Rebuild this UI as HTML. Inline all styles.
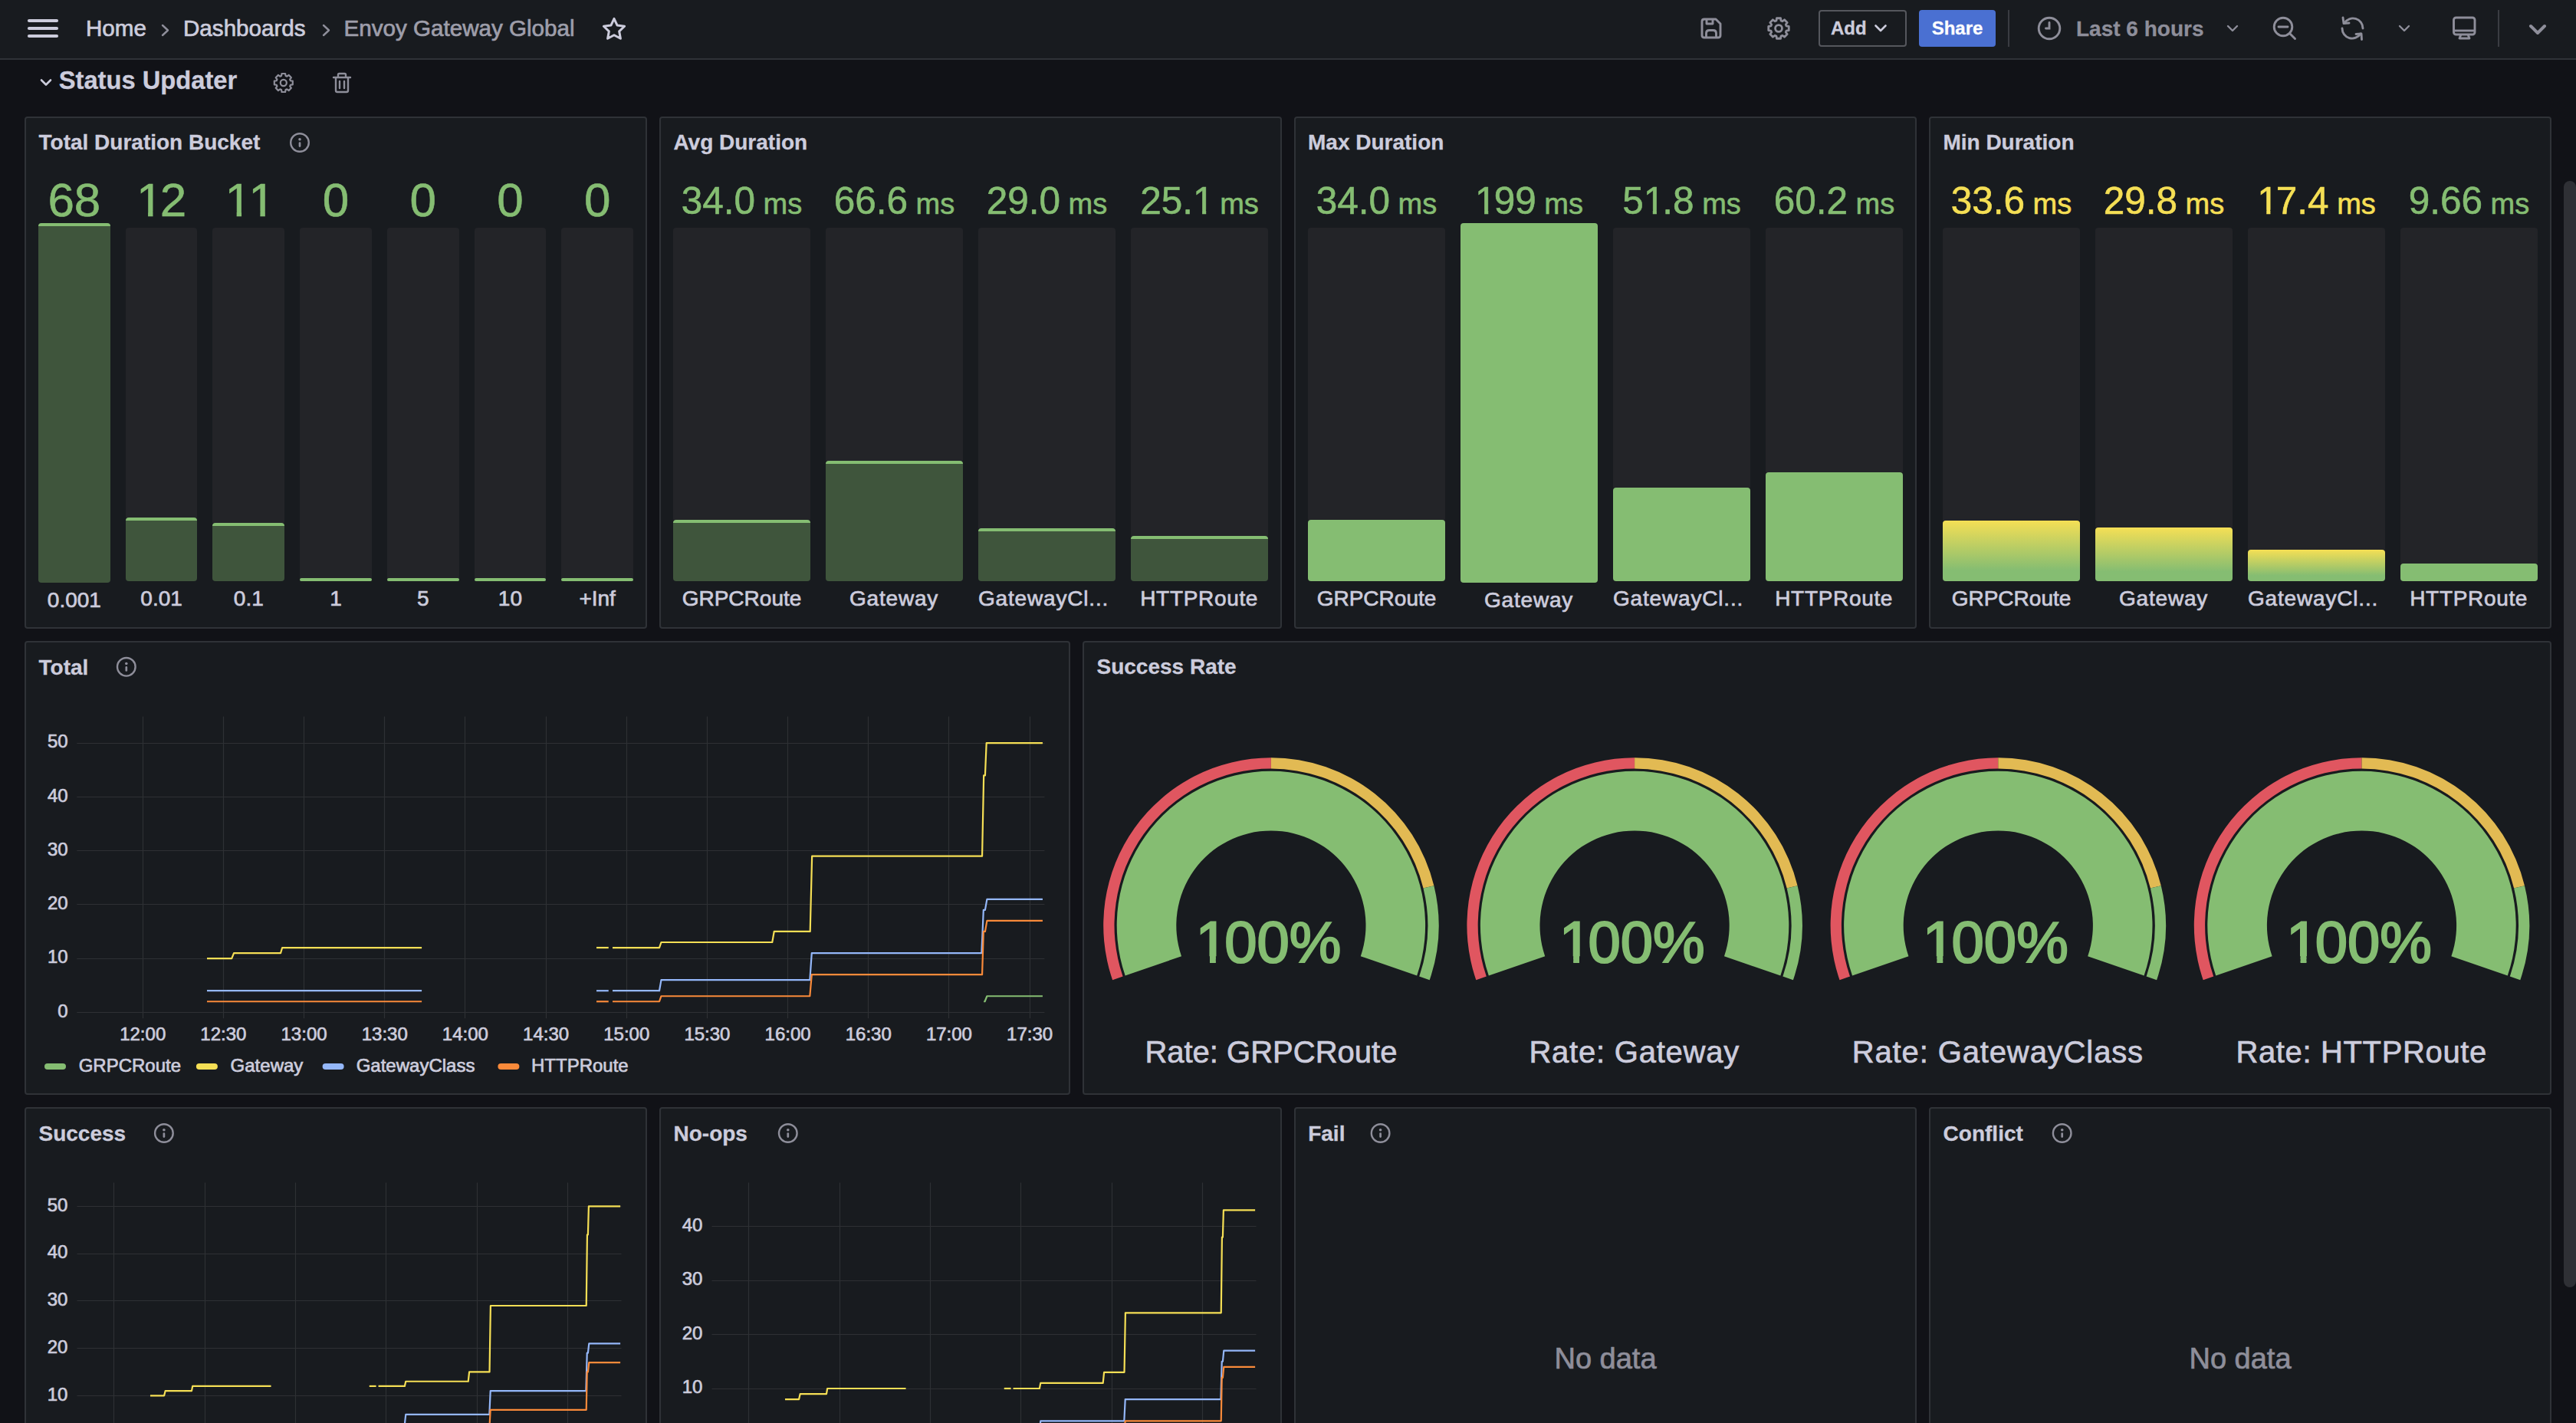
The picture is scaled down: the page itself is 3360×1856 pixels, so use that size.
<!DOCTYPE html><html><head><meta charset="utf-8"><title>Envoy Gateway Global - Dashboards - Grafana</title><style>html,body{margin:0;padding:0;}body{width:3360px;height:1856px;overflow:hidden;background:#111217;position:relative;font-family:"Liberation Sans", sans-serif;}.t{position:absolute;white-space:nowrap;}.one{display:inline-block;clip-path:polygon(-0.1em -0.2em,0.66em -0.2em,0.66em 0.742em,0.347em 0.742em,0.347em 1.1em,0.244em 1.1em,0.244em 0.742em,-0.1em 0.742em);margin-right:-0.06em;}.panel{position:absolute;background:#181b1f;border:2px solid #2f3237;border-radius:4px;}svg{position:absolute;left:0;top:0;}</style></head><body><div style="position:absolute;left:0;top:0;width:3360px;height:76px;background:#181b1f;border-bottom:2px solid #2f3237;"></div><div class="panel" style="left:32px;top:152px;width:808px;height:664px;"></div><div class="panel" style="left:860px;top:152px;width:808px;height:664px;"></div><div class="panel" style="left:1688px;top:152px;width:808px;height:664px;"></div><div class="panel" style="left:2516px;top:152px;width:808px;height:664px;"></div><div class="panel" style="left:32px;top:836px;width:1360px;height:588px;"></div><div class="panel" style="left:1412px;top:836px;width:1912px;height:588px;"></div><div class="panel" style="left:32px;top:1444px;width:808px;height:664px;"></div><div class="panel" style="left:860px;top:1444px;width:808px;height:664px;"></div><div class="panel" style="left:1688px;top:1444px;width:808px;height:664px;"></div><div class="panel" style="left:2516px;top:1444px;width:808px;height:664px;"></div><div style="position:absolute;left:3344px;top:236px;width:16px;height:1443px;border-radius:8px;background:#2f3035;"></div><div class="t" style="left:112.00px;top:21.94px;font-size:29.6px;line-height:29.6px;color:#ccccdc;-webkit-text-stroke-width:0.7px;">Home</div><div class="t" style="left:239.00px;top:21.94px;font-size:29.6px;line-height:29.6px;color:#ccccdc;-webkit-text-stroke-width:0.7px;">Dashboards</div><div class="t" style="left:448.50px;top:21.94px;font-size:29.6px;line-height:29.6px;color:#9e9eaa;-webkit-text-stroke-width:0.7px;">Envoy Gateway Global</div><div class="t" style="left:2388.00px;top:24.98px;font-size:24px;line-height:24px;color:#ccccdc;font-weight:700;-webkit-text-stroke-width:0.3px;">Add</div><div style="position:absolute;left:2372px;top:13px;width:111px;height:44px;border:2px solid #55575d;border-radius:4px;"></div><div style="position:absolute;left:2503px;top:13px;width:100px;height:48px;background:#4a70d2;border-radius:4px;"></div><div class="t" style="left:2519.70px;top:24.98px;font-size:24px;line-height:24px;color:#ffffff;font-weight:700;-webkit-text-stroke-width:0.3px;">Share</div><div style="position:absolute;left:2619px;top:13px;width:2px;height:48px;background:#3a3c42;"></div><div style="position:absolute;left:3258px;top:13px;width:2px;height:48px;background:#3a3c42;"></div><div class="t" style="left:2708.00px;top:23.50px;font-size:28px;line-height:28px;color:#8e8e9a;font-weight:700;-webkit-text-stroke-width:0.3px;">Last 6 hours</div><div class="t" style="left:76.70px;top:89.02px;font-size:32.7px;line-height:32.7px;color:#ccccdc;font-weight:700;-webkit-text-stroke-width:0.3px;">Status Updater</div><div class="t" style="left:50.50px;top:172.30px;font-size:28px;line-height:28px;color:#ccccdc;font-weight:700;-webkit-text-stroke-width:0.3px;">Total Duration Bucket</div><div class="t" style="left:878.40px;top:172.30px;font-size:28px;line-height:28px;color:#ccccdc;font-weight:700;-webkit-text-stroke-width:0.3px;">Avg Duration</div><div class="t" style="left:1706.00px;top:172.30px;font-size:28px;line-height:28px;color:#ccccdc;font-weight:700;-webkit-text-stroke-width:0.3px;">Max Duration</div><div class="t" style="left:2534.40px;top:172.30px;font-size:28px;line-height:28px;color:#ccccdc;font-weight:700;-webkit-text-stroke-width:0.3px;">Min Duration</div><div class="t" style="left:50.50px;top:856.60px;font-size:28px;line-height:28px;color:#ccccdc;font-weight:700;-webkit-text-stroke-width:0.3px;">Total</div><div class="t" style="left:1430.50px;top:856.40px;font-size:28px;line-height:28px;color:#ccccdc;font-weight:700;-webkit-text-stroke-width:0.3px;">Success Rate</div><div class="t" style="left:50.50px;top:1464.80px;font-size:28px;line-height:28px;color:#ccccdc;font-weight:700;-webkit-text-stroke-width:0.3px;">Success</div><div class="t" style="left:878.50px;top:1464.80px;font-size:28px;line-height:28px;color:#ccccdc;font-weight:700;-webkit-text-stroke-width:0.3px;">No-ops</div><div class="t" style="left:1706.20px;top:1464.80px;font-size:28px;line-height:28px;color:#ccccdc;font-weight:700;-webkit-text-stroke-width:0.3px;">Fail</div><div class="t" style="left:2534.60px;top:1464.80px;font-size:28px;line-height:28px;color:#ccccdc;font-weight:700;-webkit-text-stroke-width:0.3px;">Conflict</div><div class="t" style="left:1494.00px;width:1200px;text-align:center;top:1753.13px;font-size:38px;line-height:38px;color:#8e8e9a;-webkit-text-stroke-width:0.7px;">No data</div><div class="t" style="left:2322.00px;width:1200px;text-align:center;top:1753.13px;font-size:38px;line-height:38px;color:#8e8e9a;-webkit-text-stroke-width:0.7px;">No data</div><div style="position:absolute;left:50.00px;top:291.00px;width:93.71px;height:465.00px;background:#3f553c;border-top:4px solid #85bd72;border-radius:4px;"></div><div class="t" style="left:-503.14px;width:1200px;text-align:center;top:230.42px;font-size:62px;line-height:62px;color:#85bd72;-webkit-text-stroke-width:0.6px;">68</div><div class="t" style="left:-503.14px;width:1200px;text-align:center;top:768.50px;font-size:28px;line-height:28px;color:#ccccdc;-webkit-text-stroke-width:0.7px;">0.001</div><div style="position:absolute;left:163.71px;top:297px;width:93.71px;height:377.80px;background:#232428;border-radius:4px 4px 0 0;"></div><div style="position:absolute;left:163.71px;top:674.80px;width:93.71px;height:79.20px;background:#3f553c;border-top:4px solid #85bd72;border-radius:4px;"></div><div class="t" style="left:-389.43px;width:1200px;text-align:center;top:230.42px;font-size:62px;line-height:62px;color:#85bd72;-webkit-text-stroke-width:0.6px;"><span class="one">1</span>2</div><div class="t" style="left:-389.43px;width:1200px;text-align:center;top:766.50px;font-size:28px;line-height:28px;color:#ccccdc;-webkit-text-stroke-width:0.7px;">0.01</div><div style="position:absolute;left:277.43px;top:297px;width:93.71px;height:384.70px;background:#232428;border-radius:4px 4px 0 0;"></div><div style="position:absolute;left:277.43px;top:681.70px;width:93.71px;height:72.30px;background:#3f553c;border-top:4px solid #85bd72;border-radius:4px;"></div><div class="t" style="left:-275.71px;width:1200px;text-align:center;top:230.42px;font-size:62px;line-height:62px;color:#85bd72;-webkit-text-stroke-width:0.6px;"><span class="one">1</span><span class="one">1</span></div><div class="t" style="left:-275.71px;width:1200px;text-align:center;top:766.50px;font-size:28px;line-height:28px;color:#ccccdc;-webkit-text-stroke-width:0.7px;">0.1</div><div style="position:absolute;left:391.14px;top:297px;width:93.71px;height:456.50px;background:#232428;border-radius:4px 4px 0 0;"></div><div style="position:absolute;left:391.14px;top:753.50px;width:93.71px;height:0.50px;background:#3f553c;border-top:4px solid #85bd72;border-radius:4px;"></div><div class="t" style="left:-162.00px;width:1200px;text-align:center;top:230.42px;font-size:62px;line-height:62px;color:#85bd72;-webkit-text-stroke-width:0.6px;">0</div><div class="t" style="left:-162.00px;width:1200px;text-align:center;top:766.50px;font-size:28px;line-height:28px;color:#ccccdc;-webkit-text-stroke-width:0.7px;">1</div><div style="position:absolute;left:504.86px;top:297px;width:93.71px;height:456.50px;background:#232428;border-radius:4px 4px 0 0;"></div><div style="position:absolute;left:504.86px;top:753.50px;width:93.71px;height:0.50px;background:#3f553c;border-top:4px solid #85bd72;border-radius:4px;"></div><div class="t" style="left:-48.29px;width:1200px;text-align:center;top:230.42px;font-size:62px;line-height:62px;color:#85bd72;-webkit-text-stroke-width:0.6px;">0</div><div class="t" style="left:-48.29px;width:1200px;text-align:center;top:766.50px;font-size:28px;line-height:28px;color:#ccccdc;-webkit-text-stroke-width:0.7px;">5</div><div style="position:absolute;left:618.57px;top:297px;width:93.71px;height:456.50px;background:#232428;border-radius:4px 4px 0 0;"></div><div style="position:absolute;left:618.57px;top:753.50px;width:93.71px;height:0.50px;background:#3f553c;border-top:4px solid #85bd72;border-radius:4px;"></div><div class="t" style="left:65.43px;width:1200px;text-align:center;top:230.42px;font-size:62px;line-height:62px;color:#85bd72;-webkit-text-stroke-width:0.6px;">0</div><div class="t" style="left:65.43px;width:1200px;text-align:center;top:766.50px;font-size:28px;line-height:28px;color:#ccccdc;-webkit-text-stroke-width:0.7px;">10</div><div style="position:absolute;left:732.29px;top:297px;width:93.71px;height:456.50px;background:#232428;border-radius:4px 4px 0 0;"></div><div style="position:absolute;left:732.29px;top:753.50px;width:93.71px;height:0.50px;background:#3f553c;border-top:4px solid #85bd72;border-radius:4px;"></div><div class="t" style="left:179.14px;width:1200px;text-align:center;top:230.42px;font-size:62px;line-height:62px;color:#85bd72;-webkit-text-stroke-width:0.6px;">0</div><div class="t" style="left:179.14px;width:1200px;text-align:center;top:766.50px;font-size:28px;line-height:28px;color:#ccccdc;-webkit-text-stroke-width:0.7px;">+Inf</div><div style="position:absolute;left:878.00px;top:297px;width:179.00px;height:380.70px;background:#232428;border-radius:4px 4px 0 0;"></div><div style="position:absolute;left:878.00px;top:677.70px;width:179.00px;height:76.30px;background:#3f553c;border-top:4px solid #85bd72;border-radius:4px;"></div><div class="t" style="left:367.50px;width:1200px;text-align:center;top:237.10px;font-size:49.5px;line-height:49.5px;color:#85bd72;-webkit-text-stroke-width:0.6px;">34.0<span style="font-size:38px"> ms</span></div><div class="t" style="left:367.50px;width:1200px;text-align:center;top:766.50px;font-size:28px;line-height:28px;color:#ccccdc;-webkit-text-stroke-width:0.7px;">GRPCRoute</div><div style="position:absolute;left:1077.00px;top:297px;width:179.00px;height:304.00px;background:#232428;border-radius:4px 4px 0 0;"></div><div style="position:absolute;left:1077.00px;top:601.00px;width:179.00px;height:153.00px;background:#3f553c;border-top:4px solid #85bd72;border-radius:4px;"></div><div class="t" style="left:566.50px;width:1200px;text-align:center;top:237.10px;font-size:49.5px;line-height:49.5px;color:#85bd72;-webkit-text-stroke-width:0.6px;">66.6<span style="font-size:38px"> ms</span></div><div class="t" style="left:566.10px;width:1200px;text-align:center;top:766.50px;font-size:28px;line-height:28px;color:#ccccdc;letter-spacing:0.8px;-webkit-text-stroke-width:0.7px;">Gateway</div><div style="position:absolute;left:1276.00px;top:297px;width:179.00px;height:391.50px;background:#232428;border-radius:4px 4px 0 0;"></div><div style="position:absolute;left:1276.00px;top:688.50px;width:179.00px;height:65.50px;background:#3f553c;border-top:4px solid #85bd72;border-radius:4px;"></div><div class="t" style="left:765.50px;width:1200px;text-align:center;top:237.10px;font-size:49.5px;line-height:49.5px;color:#85bd72;-webkit-text-stroke-width:0.6px;">29.0<span style="font-size:38px"> ms</span></div><div class="t" style="left:761.09px;width:1200px;text-align:center;top:766.50px;font-size:28px;line-height:28px;color:#ccccdc;letter-spacing:0.82px;-webkit-text-stroke-width:0.7px;">GatewayCl...</div><div style="position:absolute;left:1475.00px;top:297px;width:179.00px;height:401.90px;background:#232428;border-radius:4px 4px 0 0;"></div><div style="position:absolute;left:1475.00px;top:698.90px;width:179.00px;height:55.10px;background:#3f553c;border-top:4px solid #85bd72;border-radius:4px;"></div><div class="t" style="left:964.50px;width:1200px;text-align:center;top:237.10px;font-size:49.5px;line-height:49.5px;color:#85bd72;-webkit-text-stroke-width:0.6px;">25.<span class="one">1</span><span style="font-size:38px"> ms</span></div><div class="t" style="left:964.16px;width:1200px;text-align:center;top:766.50px;font-size:28px;line-height:28px;color:#ccccdc;letter-spacing:0.67px;-webkit-text-stroke-width:0.7px;">HTTPRoute</div><div style="position:absolute;left:1706.00px;top:297px;width:179.00px;height:380.70px;background:#232428;border-radius:4px 4px 0 0;"></div><div style="position:absolute;left:1706.00px;top:677.70px;width:179.00px;height:80.30px;background:#85bd72;border-radius:4px;"></div><div class="t" style="left:1195.50px;width:1200px;text-align:center;top:237.10px;font-size:49.5px;line-height:49.5px;color:#85bd72;-webkit-text-stroke-width:0.6px;">34.0<span style="font-size:38px"> ms</span></div><div class="t" style="left:1195.50px;width:1200px;text-align:center;top:766.50px;font-size:28px;line-height:28px;color:#ccccdc;-webkit-text-stroke-width:0.7px;">GRPCRoute</div><div style="position:absolute;left:1905.00px;top:291.00px;width:179.00px;height:469.00px;background:#85bd72;border-radius:4px;"></div><div class="t" style="left:1394.50px;width:1200px;text-align:center;top:237.10px;font-size:49.5px;line-height:49.5px;color:#85bd72;-webkit-text-stroke-width:0.6px;"><span class="one">1</span>99<span style="font-size:38px"> ms</span></div><div class="t" style="left:1394.10px;width:1200px;text-align:center;top:768.50px;font-size:28px;line-height:28px;color:#ccccdc;letter-spacing:0.8px;-webkit-text-stroke-width:0.7px;">Gateway</div><div style="position:absolute;left:2104.00px;top:297px;width:179.00px;height:339.00px;background:#232428;border-radius:4px 4px 0 0;"></div><div style="position:absolute;left:2104.00px;top:636.00px;width:179.00px;height:122.00px;background:#85bd72;border-radius:4px;"></div><div class="t" style="left:1593.50px;width:1200px;text-align:center;top:237.10px;font-size:49.5px;line-height:49.5px;color:#85bd72;-webkit-text-stroke-width:0.6px;">5<span class="one">1</span>.8<span style="font-size:38px"> ms</span></div><div class="t" style="left:1589.09px;width:1200px;text-align:center;top:766.50px;font-size:28px;line-height:28px;color:#ccccdc;letter-spacing:0.82px;-webkit-text-stroke-width:0.7px;">GatewayCl...</div><div style="position:absolute;left:2303.00px;top:297px;width:179.00px;height:318.70px;background:#232428;border-radius:4px 4px 0 0;"></div><div style="position:absolute;left:2303.00px;top:615.70px;width:179.00px;height:142.30px;background:#85bd72;border-radius:4px;"></div><div class="t" style="left:1792.50px;width:1200px;text-align:center;top:237.10px;font-size:49.5px;line-height:49.5px;color:#85bd72;-webkit-text-stroke-width:0.6px;">60.2<span style="font-size:38px"> ms</span></div><div class="t" style="left:1792.16px;width:1200px;text-align:center;top:766.50px;font-size:28px;line-height:28px;color:#ccccdc;letter-spacing:0.67px;-webkit-text-stroke-width:0.7px;">HTTPRoute</div><div style="position:absolute;left:2534.00px;top:297px;width:179.00px;height:381.70px;background:#232428;border-radius:4px 4px 0 0;"></div><div style="position:absolute;left:2534.00px;top:678.70px;width:179.00px;height:79.30px;background:linear-gradient(0deg,#85bd72 18%,#f5df55 100%);border-radius:4px;"></div><div class="t" style="left:2023.50px;width:1200px;text-align:center;top:237.10px;font-size:49.5px;line-height:49.5px;color:#f5df55;-webkit-text-stroke-width:0.6px;">33.6<span style="font-size:38px"> ms</span></div><div class="t" style="left:2023.50px;width:1200px;text-align:center;top:766.50px;font-size:28px;line-height:28px;color:#ccccdc;-webkit-text-stroke-width:0.7px;">GRPCRoute</div><div style="position:absolute;left:2733.00px;top:297px;width:179.00px;height:390.60px;background:#232428;border-radius:4px 4px 0 0;"></div><div style="position:absolute;left:2733.00px;top:687.60px;width:179.00px;height:70.40px;background:linear-gradient(0deg,#85bd72 18%,#f5df55 100%);border-radius:4px;"></div><div class="t" style="left:2222.50px;width:1200px;text-align:center;top:237.10px;font-size:49.5px;line-height:49.5px;color:#f5df55;-webkit-text-stroke-width:0.6px;">29.8<span style="font-size:38px"> ms</span></div><div class="t" style="left:2222.10px;width:1200px;text-align:center;top:766.50px;font-size:28px;line-height:28px;color:#ccccdc;letter-spacing:0.8px;-webkit-text-stroke-width:0.7px;">Gateway</div><div style="position:absolute;left:2932.00px;top:297px;width:179.00px;height:419.60px;background:#232428;border-radius:4px 4px 0 0;"></div><div style="position:absolute;left:2932.00px;top:716.60px;width:179.00px;height:41.40px;background:linear-gradient(0deg,#85bd72 18%,#f5df55 100%);border-radius:4px;"></div><div class="t" style="left:2421.50px;width:1200px;text-align:center;top:237.10px;font-size:49.5px;line-height:49.5px;color:#f5df55;-webkit-text-stroke-width:0.6px;"><span class="one">1</span>7.4<span style="font-size:38px"> ms</span></div><div class="t" style="left:2417.09px;width:1200px;text-align:center;top:766.50px;font-size:28px;line-height:28px;color:#ccccdc;letter-spacing:0.82px;-webkit-text-stroke-width:0.7px;">GatewayCl...</div><div style="position:absolute;left:3131.00px;top:297px;width:179.00px;height:437.80px;background:#232428;border-radius:4px 4px 0 0;"></div><div style="position:absolute;left:3131.00px;top:734.80px;width:179.00px;height:23.20px;background:linear-gradient(0deg,#85bd72 18%,#85bd72 100%);border-radius:4px;"></div><div class="t" style="left:2620.50px;width:1200px;text-align:center;top:237.10px;font-size:49.5px;line-height:49.5px;color:#85bd72;-webkit-text-stroke-width:0.6px;">9.66<span style="font-size:38px"> ms</span></div><div class="t" style="left:2620.16px;width:1200px;text-align:center;top:766.50px;font-size:28px;line-height:28px;color:#ccccdc;letter-spacing:0.67px;-webkit-text-stroke-width:0.7px;">HTTPRoute</div><div class="t" style="left:-511.30px;width:600px;text-align:right;top:1306.58px;font-size:24px;line-height:24px;color:#ccccdc;-webkit-text-stroke-width:0.7px;">0</div><div class="t" style="left:-511.30px;width:600px;text-align:right;top:1236.36px;font-size:24px;line-height:24px;color:#ccccdc;-webkit-text-stroke-width:0.7px;">10</div><div class="t" style="left:-511.30px;width:600px;text-align:right;top:1166.14px;font-size:24px;line-height:24px;color:#ccccdc;-webkit-text-stroke-width:0.7px;">20</div><div class="t" style="left:-511.30px;width:600px;text-align:right;top:1095.92px;font-size:24px;line-height:24px;color:#ccccdc;-webkit-text-stroke-width:0.7px;">30</div><div class="t" style="left:-511.30px;width:600px;text-align:right;top:1025.70px;font-size:24px;line-height:24px;color:#ccccdc;-webkit-text-stroke-width:0.7px;">40</div><div class="t" style="left:-511.30px;width:600px;text-align:right;top:955.48px;font-size:24px;line-height:24px;color:#ccccdc;-webkit-text-stroke-width:0.7px;">50</div><div class="t" style="left:-413.81px;width:1200px;text-align:center;top:1336.58px;font-size:24px;line-height:24px;color:#ccccdc;-webkit-text-stroke-width:0.7px;">12:00</div><div class="t" style="left:-308.63px;width:1200px;text-align:center;top:1336.58px;font-size:24px;line-height:24px;color:#ccccdc;-webkit-text-stroke-width:0.7px;">12:30</div><div class="t" style="left:-203.46px;width:1200px;text-align:center;top:1336.58px;font-size:24px;line-height:24px;color:#ccccdc;-webkit-text-stroke-width:0.7px;">13:00</div><div class="t" style="left:-98.28px;width:1200px;text-align:center;top:1336.58px;font-size:24px;line-height:24px;color:#ccccdc;-webkit-text-stroke-width:0.7px;">13:30</div><div class="t" style="left:6.89px;width:1200px;text-align:center;top:1336.58px;font-size:24px;line-height:24px;color:#ccccdc;-webkit-text-stroke-width:0.7px;">14:00</div><div class="t" style="left:112.07px;width:1200px;text-align:center;top:1336.58px;font-size:24px;line-height:24px;color:#ccccdc;-webkit-text-stroke-width:0.7px;">14:30</div><div class="t" style="left:217.24px;width:1200px;text-align:center;top:1336.58px;font-size:24px;line-height:24px;color:#ccccdc;-webkit-text-stroke-width:0.7px;">15:00</div><div class="t" style="left:322.42px;width:1200px;text-align:center;top:1336.58px;font-size:24px;line-height:24px;color:#ccccdc;-webkit-text-stroke-width:0.7px;">15:30</div><div class="t" style="left:427.59px;width:1200px;text-align:center;top:1336.58px;font-size:24px;line-height:24px;color:#ccccdc;-webkit-text-stroke-width:0.7px;">16:00</div><div class="t" style="left:532.77px;width:1200px;text-align:center;top:1336.58px;font-size:24px;line-height:24px;color:#ccccdc;-webkit-text-stroke-width:0.7px;">16:30</div><div class="t" style="left:637.94px;width:1200px;text-align:center;top:1336.58px;font-size:24px;line-height:24px;color:#ccccdc;-webkit-text-stroke-width:0.7px;">17:00</div><div class="t" style="left:743.12px;width:1200px;text-align:center;top:1336.58px;font-size:24px;line-height:24px;color:#ccccdc;-webkit-text-stroke-width:0.7px;">17:30</div><div class="t" style="left:-511.60px;width:600px;text-align:right;top:1806.56px;font-size:24px;line-height:24px;color:#ccccdc;-webkit-text-stroke-width:0.7px;">10</div><div class="t" style="left:-511.60px;width:600px;text-align:right;top:1744.83px;font-size:24px;line-height:24px;color:#ccccdc;-webkit-text-stroke-width:0.7px;">20</div><div class="t" style="left:-511.60px;width:600px;text-align:right;top:1683.11px;font-size:24px;line-height:24px;color:#ccccdc;-webkit-text-stroke-width:0.7px;">30</div><div class="t" style="left:-511.60px;width:600px;text-align:right;top:1621.38px;font-size:24px;line-height:24px;color:#ccccdc;-webkit-text-stroke-width:0.7px;">40</div><div class="t" style="left:-511.60px;width:600px;text-align:right;top:1559.66px;font-size:24px;line-height:24px;color:#ccccdc;-webkit-text-stroke-width:0.7px;">50</div><div class="t" style="left:316.40px;width:600px;text-align:right;top:1797.28px;font-size:24px;line-height:24px;color:#ccccdc;-webkit-text-stroke-width:0.7px;">10</div><div class="t" style="left:316.40px;width:600px;text-align:right;top:1726.78px;font-size:24px;line-height:24px;color:#ccccdc;-webkit-text-stroke-width:0.7px;">20</div><div class="t" style="left:316.40px;width:600px;text-align:right;top:1656.28px;font-size:24px;line-height:24px;color:#ccccdc;-webkit-text-stroke-width:0.7px;">30</div><div class="t" style="left:316.40px;width:600px;text-align:right;top:1585.78px;font-size:24px;line-height:24px;color:#ccccdc;-webkit-text-stroke-width:0.7px;">40</div><div class="t" style="left:102.70px;top:1378.48px;font-size:24px;line-height:24px;color:#ccccdc;-webkit-text-stroke-width:0.7px;">GRPCRoute</div><div class="t" style="left:300.60px;top:1378.48px;font-size:24px;line-height:24px;color:#ccccdc;-webkit-text-stroke-width:0.7px;">Gateway</div><div class="t" style="left:464.70px;top:1378.48px;font-size:24px;line-height:24px;color:#ccccdc;-webkit-text-stroke-width:0.7px;">GatewayClass</div><div class="t" style="left:693.00px;top:1378.48px;font-size:24px;line-height:24px;color:#ccccdc;-webkit-text-stroke-width:0.7px;">HTTPRoute</div><div class="t" style="left:1054.40px;width:1200px;text-align:center;top:1190.87px;font-size:76px;line-height:76px;color:#85bd72;-webkit-text-stroke:2.2px #85bd72;"><span class="one">1</span>00%</div><div class="t" style="left:1057.90px;width:1200px;text-align:center;top:1351.74px;font-size:40px;line-height:40px;color:#ccccdc;-webkit-text-stroke-width:0.7px;">Rate: GRPCRoute</div><div class="t" style="left:1528.60px;width:1200px;text-align:center;top:1190.87px;font-size:76px;line-height:76px;color:#85bd72;-webkit-text-stroke:2.2px #85bd72;"><span class="one">1</span>00%</div><div class="t" style="left:1531.71px;width:1200px;text-align:center;top:1351.74px;font-size:40px;line-height:40px;color:#ccccdc;letter-spacing:0.77px;-webkit-text-stroke-width:0.7px;">Rate: Gateway</div><div class="t" style="left:2002.80px;width:1200px;text-align:center;top:1190.87px;font-size:76px;line-height:76px;color:#85bd72;-webkit-text-stroke:2.2px #85bd72;"><span class="one">1</span>00%</div><div class="t" style="left:2005.87px;width:1200px;text-align:center;top:1351.74px;font-size:40px;line-height:40px;color:#ccccdc;letter-spacing:0.87px;-webkit-text-stroke-width:0.7px;">Rate: GatewayClass</div><div class="t" style="left:2477.00px;width:1200px;text-align:center;top:1190.87px;font-size:76px;line-height:76px;color:#85bd72;-webkit-text-stroke:2.2px #85bd72;"><span class="one">1</span>00%</div><div class="t" style="left:2480.18px;width:1200px;text-align:center;top:1351.74px;font-size:40px;line-height:40px;color:#ccccdc;letter-spacing:0.64px;-webkit-text-stroke-width:0.7px;">Rate: HTTPRoute</div><svg width="3360" height="1856" viewBox="0 0 3360 1856"><line x1="38" y1="27" x2="74" y2="27" stroke="#ccccdc" stroke-width="4.2" stroke-linecap="round"/><line x1="38" y1="37" x2="74" y2="37" stroke="#ccccdc" stroke-width="4.2" stroke-linecap="round"/><line x1="38" y1="47" x2="74" y2="47" stroke="#ccccdc" stroke-width="4.2" stroke-linecap="round"/><polyline points="212,33 219,39.5 212,46" fill="none" stroke="#8e8e9a" stroke-width="2.4" stroke-linecap="round" stroke-linejoin="round"/><polyline points="422,33 429,39.5 422,46" fill="none" stroke="#8e8e9a" stroke-width="2.4" stroke-linecap="round" stroke-linejoin="round"/><polygon points="801.00,24.40 805.11,33.04 814.60,34.28 807.66,40.86 809.41,50.27 801.00,45.70 792.59,50.27 794.34,40.86 787.40,34.28 796.89,33.04" fill="none" stroke="#ccccdc" stroke-width="3" stroke-linejoin="round"/><polygon points="2330.08,33.95 2333.26,34.45 2333.26,39.55 2330.08,40.05 2329.28,41.97 2331.18,44.57 2327.57,48.18 2324.97,46.28 2323.05,47.08 2322.55,50.26 2317.45,50.26 2316.95,47.08 2315.03,46.28 2312.43,48.18 2308.82,44.57 2310.72,41.97 2309.92,40.05 2306.74,39.55 2306.74,34.45 2309.92,33.95 2310.72,32.03 2308.82,29.43 2312.43,25.82 2315.03,27.72 2316.95,26.92 2317.45,23.74 2322.55,23.74 2323.05,26.92 2324.97,27.72 2327.57,25.82 2331.18,29.43 2329.28,32.03" fill="none" stroke="#8e8e9a" stroke-width="2.8" stroke-linejoin="round"/><circle cx="2320" cy="37" r="4.46" fill="none" stroke="#8e8e9a" stroke-width="2.8"/><polygon points="378.91,105.24 381.78,105.70 381.78,110.30 378.91,110.76 378.19,112.49 379.90,114.84 376.64,118.10 374.29,116.39 372.56,117.11 372.10,119.98 367.50,119.98 367.04,117.11 365.31,116.39 362.96,118.10 359.70,114.84 361.41,112.49 360.69,110.76 357.82,110.30 357.82,105.70 360.69,105.24 361.41,103.51 359.70,101.16 362.96,97.90 365.31,99.61 367.04,98.89 367.50,96.02 372.10,96.02 372.56,98.89 374.29,99.61 376.64,97.90 379.90,101.16 378.19,103.51" fill="none" stroke="#8e8e9a" stroke-width="2.2" stroke-linejoin="round"/><circle cx="369.8" cy="108" r="4.03" fill="none" stroke="#8e8e9a" stroke-width="2.2"/><g fill="none" stroke="#8e8e9a" stroke-width="2.4" stroke-linecap="round" stroke-linejoin="round"><path d="M435 101 H457 M441 101 V97.5 Q441 96 442.5 96 H449.5 Q451 96 451 97.5 V101 M438 101 V118 Q438 120 440 120 H452 Q454 120 454 118 V101 M443 106 V115 M449 106 V115"/></g><polyline points="54,104.5 60,110.5 66,104.5" fill="none" stroke="#ccccdc" stroke-width="2.6" stroke-linecap="round" stroke-linejoin="round"/><g fill="none" stroke="#8e8e9a" stroke-width="2.9" stroke-linejoin="round"><path d="M2220 28 Q2220 25 2223 25 H2238 L2244 31 V46 Q2244 49 2241 49 H2223 Q2220 49 2220 46 Z"/><path d="M2226 25 V31 H2234 V25"/><path d="M2225.5 49 V43.5 Q2225.5 39.5 2229.5 39.5 H2234.5 Q2238.5 39.5 2238.5 43.5 V49"/></g><polyline points="2446.5,33.5 2453,40 2459.5,33.5" fill="none" stroke="#ccccdc" stroke-width="2.6" stroke-linecap="round" stroke-linejoin="round"/><g fill="none" stroke="#8e8e9a" stroke-width="2.9" stroke-linecap="round"><circle cx="2673" cy="37" r="13.8"/><polyline points="2673,29.5 2673,37 2668.5,37"/></g><polyline points="2906,34 2912,40 2918,34" fill="none" stroke="#8e8e9a" stroke-width="2.4" stroke-linecap="round" stroke-linejoin="round"/><polyline points="3130,34 3136,40 3142,34" fill="none" stroke="#8e8e9a" stroke-width="2.4" stroke-linecap="round" stroke-linejoin="round"/><g fill="none" stroke="#8e8e9a" stroke-width="2.9" stroke-linecap="round"><circle cx="2978" cy="35" r="11.8"/><line x1="2972" y1="35" x2="2984" y2="35"/><line x1="2986.5" y1="43.5" x2="2993.5" y2="50.5"/></g><g fill="none" stroke="#8e8e9a" stroke-width="2.9" stroke-linecap="round" stroke-linejoin="round"><path d="M3082 37 A13 13 0 0 0 3058 30"/><polyline points="3056,23 3057,30.5 3064,30"/><path d="M3055 37 A13 13 0 0 0 3079 44"/><polyline points="3080.5,51.5 3080,44 3073,44.5"/></g><g fill="none" stroke="#8e8e9a" stroke-width="2.9" stroke-linejoin="round"><rect x="3200.5" y="23" width="27.5" height="22" rx="3"/><line x1="3201" y1="40" x2="3228" y2="40"/><path d="M3210 45 L3208 50 H3221 L3219 45"/></g><polyline points="3301,34 3310,43 3319,34" fill="none" stroke="#8e8e9a" stroke-width="4" stroke-linecap="round" stroke-linejoin="round"/><g><circle cx="391" cy="186" r="11.8" fill="none" stroke="#8e8e9a" stroke-width="2.4"/><circle cx="391" cy="181.7" r="1.8" fill="#8e8e9a"/><line x1="391" y1="186.6" x2="391" y2="190.6" stroke="#8e8e9a" stroke-width="2.7" stroke-linecap="round"/></g><g><circle cx="164.8" cy="869.8" r="11.8" fill="none" stroke="#8e8e9a" stroke-width="2.4"/><circle cx="164.8" cy="865.5" r="1.8" fill="#8e8e9a"/><line x1="164.8" y1="870.4" x2="164.8" y2="874.4" stroke="#8e8e9a" stroke-width="2.7" stroke-linecap="round"/></g><g><circle cx="213.9" cy="1478" r="11.8" fill="none" stroke="#8e8e9a" stroke-width="2.4"/><circle cx="213.9" cy="1473.7" r="1.8" fill="#8e8e9a"/><line x1="213.9" y1="1478.6" x2="213.9" y2="1482.6" stroke="#8e8e9a" stroke-width="2.7" stroke-linecap="round"/></g><g><circle cx="1027.8" cy="1478" r="11.8" fill="none" stroke="#8e8e9a" stroke-width="2.4"/><circle cx="1027.8" cy="1473.7" r="1.8" fill="#8e8e9a"/><line x1="1027.8" y1="1478.6" x2="1027.8" y2="1482.6" stroke="#8e8e9a" stroke-width="2.7" stroke-linecap="round"/></g><g><circle cx="1800.6" cy="1478" r="11.8" fill="none" stroke="#8e8e9a" stroke-width="2.4"/><circle cx="1800.6" cy="1473.7" r="1.8" fill="#8e8e9a"/><line x1="1800.6" y1="1478.6" x2="1800.6" y2="1482.6" stroke="#8e8e9a" stroke-width="2.7" stroke-linecap="round"/></g><g><circle cx="2689.7" cy="1478" r="11.8" fill="none" stroke="#8e8e9a" stroke-width="2.4"/><circle cx="2689.7" cy="1473.7" r="1.8" fill="#8e8e9a"/><line x1="2689.7" y1="1478.6" x2="2689.7" y2="1482.6" stroke="#8e8e9a" stroke-width="2.7" stroke-linecap="round"/></g><line x1="100.3" y1="1320.50" x2="1362.4" y2="1320.50" stroke="#2e3034" stroke-width="1.2"/><line x1="100.3" y1="1250.50" x2="1362.4" y2="1250.50" stroke="#2e3034" stroke-width="1.2"/><line x1="100.3" y1="1179.50" x2="1362.4" y2="1179.50" stroke="#2e3034" stroke-width="1.2"/><line x1="100.3" y1="1109.50" x2="1362.4" y2="1109.50" stroke="#2e3034" stroke-width="1.2"/><line x1="100.3" y1="1039.50" x2="1362.4" y2="1039.50" stroke="#2e3034" stroke-width="1.2"/><line x1="100.3" y1="969.50" x2="1362.4" y2="969.50" stroke="#2e3034" stroke-width="1.2"/><line x1="186.50" y1="934.6" x2="186.50" y2="1328.3" stroke="#2e3034" stroke-width="1.2"/><line x1="291.50" y1="934.6" x2="291.50" y2="1328.3" stroke="#2e3034" stroke-width="1.2"/><line x1="396.50" y1="934.6" x2="396.50" y2="1328.3" stroke="#2e3034" stroke-width="1.2"/><line x1="501.50" y1="934.6" x2="501.50" y2="1328.3" stroke="#2e3034" stroke-width="1.2"/><line x1="606.50" y1="934.6" x2="606.50" y2="1328.3" stroke="#2e3034" stroke-width="1.2"/><line x1="712.50" y1="934.6" x2="712.50" y2="1328.3" stroke="#2e3034" stroke-width="1.2"/><line x1="817.50" y1="934.6" x2="817.50" y2="1328.3" stroke="#2e3034" stroke-width="1.2"/><line x1="922.50" y1="934.6" x2="922.50" y2="1328.3" stroke="#2e3034" stroke-width="1.2"/><line x1="1027.50" y1="934.6" x2="1027.50" y2="1328.3" stroke="#2e3034" stroke-width="1.2"/><line x1="1132.50" y1="934.6" x2="1132.50" y2="1328.3" stroke="#2e3034" stroke-width="1.2"/><line x1="1237.50" y1="934.6" x2="1237.50" y2="1328.3" stroke="#2e3034" stroke-width="1.2"/><line x1="1343.50" y1="934.6" x2="1343.50" y2="1328.3" stroke="#2e3034" stroke-width="1.2"/><polyline points="1283.17,1306.26 1284.57,1306.26 1287.38,1299.23 1359.95,1299.23" fill="none" stroke="#85bd72" stroke-width="2.2" stroke-linejoin="round"/><polyline points="269.98,1250.08 302.24,1250.08 305.04,1243.06 366.04,1243.06 368.15,1236.04 550.10,1236.04" fill="none" stroke="#f5df55" stroke-width="2.2" stroke-linejoin="round"/><polyline points="777.98,1236.04 793.75,1236.04" fill="none" stroke="#f5df55" stroke-width="2.2" stroke-linejoin="round"/><polyline points="799.01,1236.04 860.01,1236.04 862.47,1229.01 1007.26,1229.01 1009.71,1214.97 1056.69,1214.97 1059.15,1116.66 1281.06,1116.66 1283.17,1011.33 1284.92,1011.33 1286.67,969.20 1359.95,969.20" fill="none" stroke="#f5df55" stroke-width="2.2" stroke-linejoin="round"/><polyline points="269.98,1292.21 550.10,1292.21" fill="none" stroke="#94b7f9" stroke-width="2.2" stroke-linejoin="round"/><polyline points="777.98,1292.21 793.75,1292.21" fill="none" stroke="#94b7f9" stroke-width="2.2" stroke-linejoin="round"/><polyline points="799.01,1292.21 860.01,1292.21 862.47,1278.17 1056.34,1278.17 1058.79,1243.06 1280.36,1243.06 1282.82,1186.88 1284.92,1186.88 1287.38,1172.84 1359.95,1172.84" fill="none" stroke="#94b7f9" stroke-width="2.2" stroke-linejoin="round"/><polyline points="269.98,1306.26 550.10,1306.26" fill="none" stroke="#f98a3a" stroke-width="2.2" stroke-linejoin="round"/><polyline points="777.98,1306.26 793.75,1306.26" fill="none" stroke="#f98a3a" stroke-width="2.2" stroke-linejoin="round"/><polyline points="799.01,1306.26 860.01,1306.26 862.47,1299.23 1056.34,1299.23 1058.79,1271.15 1281.06,1271.15 1282.82,1214.97 1284.92,1214.97 1287.38,1200.93 1359.95,1200.93" fill="none" stroke="#f98a3a" stroke-width="2.2" stroke-linejoin="round"/><line x1="100.5" y1="1820.50" x2="810.5" y2="1820.50" stroke="#2e3034" stroke-width="1.2"/><line x1="100.5" y1="1758.50" x2="810.5" y2="1758.50" stroke="#2e3034" stroke-width="1.2"/><line x1="100.5" y1="1696.50" x2="810.5" y2="1696.50" stroke="#2e3034" stroke-width="1.2"/><line x1="100.5" y1="1635.50" x2="810.5" y2="1635.50" stroke="#2e3034" stroke-width="1.2"/><line x1="100.5" y1="1573.50" x2="810.5" y2="1573.50" stroke="#2e3034" stroke-width="1.2"/><line x1="148.50" y1="1542.4" x2="148.50" y2="1890.0" stroke="#2e3034" stroke-width="1.2"/><line x1="267.50" y1="1542.4" x2="267.50" y2="1890.0" stroke="#2e3034" stroke-width="1.2"/><line x1="385.50" y1="1542.4" x2="385.50" y2="1890.0" stroke="#2e3034" stroke-width="1.2"/><line x1="503.50" y1="1542.4" x2="503.50" y2="1890.0" stroke="#2e3034" stroke-width="1.2"/><line x1="622.50" y1="1542.4" x2="622.50" y2="1890.0" stroke="#2e3034" stroke-width="1.2"/><line x1="740.50" y1="1542.4" x2="740.50" y2="1890.0" stroke="#2e3034" stroke-width="1.2"/><polyline points="195.96,1820.28 214.10,1820.28 215.68,1814.10 249.99,1814.10 251.18,1807.93 353.54,1807.93" fill="none" stroke="#f5df55" stroke-width="2.2" stroke-linejoin="round"/><polyline points="481.73,1807.93 490.61,1807.93" fill="none" stroke="#f5df55" stroke-width="2.2" stroke-linejoin="round"/><polyline points="493.56,1807.93 527.88,1807.93 529.26,1801.76 610.71,1801.76 612.09,1789.41 638.52,1789.41 639.90,1703.00 764.74,1703.00 765.93,1610.41 766.91,1610.41 767.90,1573.38 809.12,1573.38" fill="none" stroke="#f5df55" stroke-width="2.2" stroke-linejoin="round"/><polyline points="195.96,1857.31 353.54,1857.31" fill="none" stroke="#94b7f9" stroke-width="2.2" stroke-linejoin="round"/><polyline points="481.73,1857.31 490.61,1857.31" fill="none" stroke="#94b7f9" stroke-width="2.2" stroke-linejoin="round"/><polyline points="493.56,1857.31 527.88,1857.31 529.26,1844.96 638.33,1844.96 639.71,1814.10 764.35,1814.10 765.73,1764.72 766.91,1764.72 768.29,1752.38 809.12,1752.38" fill="none" stroke="#94b7f9" stroke-width="2.2" stroke-linejoin="round"/><polyline points="195.96,1869.65 353.54,1869.65" fill="none" stroke="#f98a3a" stroke-width="2.2" stroke-linejoin="round"/><polyline points="481.73,1869.65 490.61,1869.65" fill="none" stroke="#f98a3a" stroke-width="2.2" stroke-linejoin="round"/><polyline points="493.56,1869.65 527.88,1869.65 529.26,1863.48 638.33,1863.48 639.71,1838.79 764.74,1838.79 765.73,1789.41 766.91,1789.41 768.29,1777.07 809.12,1777.07" fill="none" stroke="#f98a3a" stroke-width="2.2" stroke-linejoin="round"/><line x1="928.5" y1="1811.50" x2="1638.5" y2="1811.50" stroke="#2e3034" stroke-width="1.2"/><line x1="928.5" y1="1740.50" x2="1638.5" y2="1740.50" stroke="#2e3034" stroke-width="1.2"/><line x1="928.5" y1="1670.50" x2="1638.5" y2="1670.50" stroke="#2e3034" stroke-width="1.2"/><line x1="928.5" y1="1599.50" x2="1638.5" y2="1599.50" stroke="#2e3034" stroke-width="1.2"/><line x1="976.50" y1="1542.4" x2="976.50" y2="1889.5" stroke="#2e3034" stroke-width="1.2"/><line x1="1095.50" y1="1542.4" x2="1095.50" y2="1889.5" stroke="#2e3034" stroke-width="1.2"/><line x1="1213.50" y1="1542.4" x2="1213.50" y2="1889.5" stroke="#2e3034" stroke-width="1.2"/><line x1="1331.50" y1="1542.4" x2="1331.50" y2="1889.5" stroke="#2e3034" stroke-width="1.2"/><line x1="1450.50" y1="1542.4" x2="1450.50" y2="1889.5" stroke="#2e3034" stroke-width="1.2"/><line x1="1568.50" y1="1542.4" x2="1568.50" y2="1889.5" stroke="#2e3034" stroke-width="1.2"/><polyline points="1023.96,1825.10 1042.10,1825.10 1043.68,1818.05 1077.99,1818.05 1079.18,1811.00 1181.54,1811.00" fill="none" stroke="#f5df55" stroke-width="2.2" stroke-linejoin="round"/><polyline points="1309.73,1811.00 1318.61,1811.00" fill="none" stroke="#f5df55" stroke-width="2.2" stroke-linejoin="round"/><polyline points="1321.56,1811.00 1355.88,1811.00 1357.26,1803.95 1438.71,1803.95 1440.09,1789.85 1466.52,1789.85 1467.90,1712.30 1592.74,1712.30 1593.93,1613.60 1594.91,1613.60 1595.90,1578.35 1637.12,1578.35" fill="none" stroke="#f5df55" stroke-width="2.2" stroke-linejoin="round"/><polyline points="1023.96,1867.40 1181.54,1867.40" fill="none" stroke="#94b7f9" stroke-width="2.2" stroke-linejoin="round"/><polyline points="1309.73,1867.40 1318.61,1867.40" fill="none" stroke="#94b7f9" stroke-width="2.2" stroke-linejoin="round"/><polyline points="1321.56,1867.40 1355.88,1867.40 1357.26,1853.30 1466.33,1853.30 1467.71,1825.10 1592.35,1825.10 1593.73,1775.75 1594.91,1775.75 1596.29,1761.65 1637.12,1761.65" fill="none" stroke="#94b7f9" stroke-width="2.2" stroke-linejoin="round"/><polyline points="1023.96,1874.45 1181.54,1874.45" fill="none" stroke="#f98a3a" stroke-width="2.2" stroke-linejoin="round"/><polyline points="1309.73,1874.45 1318.61,1874.45" fill="none" stroke="#f98a3a" stroke-width="2.2" stroke-linejoin="round"/><polyline points="1321.56,1874.45 1355.88,1874.45 1357.26,1867.40 1466.33,1867.40 1467.71,1853.30 1592.74,1853.30 1593.73,1796.90 1594.91,1796.90 1596.29,1782.80 1637.12,1782.80" fill="none" stroke="#f98a3a" stroke-width="2.2" stroke-linejoin="round"/><rect x="58" y="1387" width="28" height="8" rx="4" fill="#85bd72"/><rect x="255.9" y="1387" width="28" height="8" rx="4" fill="#f5df55"/><rect x="420.6" y="1387" width="28" height="8" rx="4" fill="#94b7f9"/><rect x="649.4" y="1387" width="28" height="8" rx="4" fill="#f98a3a"/><path d="M1451.12 1278.20 A218.7 218.7 0 0 1 1657.90 988.30 L1657.90 1002.60 A204.4 204.4 0 0 0 1464.64 1273.55 Z" fill="#e05660"/><path d="M1657.90 988.30 A218.7 218.7 0 0 1 1870.38 1155.20 L1856.48 1158.59 A204.4 204.4 0 0 0 1657.90 1002.60 Z" fill="#e2ba53"/><path d="M1870.38 1155.20 A218.7 218.7 0 0 1 1864.68 1278.20 L1851.16 1273.55 A204.4 204.4 0 0 0 1856.48 1158.59 Z" fill="#85bd72"/><path d="M1467.66 1272.50 A201.2 201.2 0 1 1 1848.14 1272.50 L1774.77 1247.24 A123.6 123.6 0 1 0 1541.03 1247.24 Z" fill="#85bd72"/><path d="M1925.32 1278.20 A218.7 218.7 0 0 1 2132.10 988.30 L2132.10 1002.60 A204.4 204.4 0 0 0 1938.84 1273.55 Z" fill="#e05660"/><path d="M2132.10 988.30 A218.7 218.7 0 0 1 2344.58 1155.20 L2330.68 1158.59 A204.4 204.4 0 0 0 2132.10 1002.60 Z" fill="#e2ba53"/><path d="M2344.58 1155.20 A218.7 218.7 0 0 1 2338.88 1278.20 L2325.36 1273.55 A204.4 204.4 0 0 0 2330.68 1158.59 Z" fill="#85bd72"/><path d="M1941.86 1272.50 A201.2 201.2 0 1 1 2322.34 1272.50 L2248.97 1247.24 A123.6 123.6 0 1 0 2015.23 1247.24 Z" fill="#85bd72"/><path d="M2399.52 1278.20 A218.7 218.7 0 0 1 2606.30 988.30 L2606.30 1002.60 A204.4 204.4 0 0 0 2413.04 1273.55 Z" fill="#e05660"/><path d="M2606.30 988.30 A218.7 218.7 0 0 1 2818.78 1155.20 L2804.88 1158.59 A204.4 204.4 0 0 0 2606.30 1002.60 Z" fill="#e2ba53"/><path d="M2818.78 1155.20 A218.7 218.7 0 0 1 2813.08 1278.20 L2799.56 1273.55 A204.4 204.4 0 0 0 2804.88 1158.59 Z" fill="#85bd72"/><path d="M2416.06 1272.50 A201.2 201.2 0 1 1 2796.54 1272.50 L2723.17 1247.24 A123.6 123.6 0 1 0 2489.43 1247.24 Z" fill="#85bd72"/><path d="M2873.72 1278.20 A218.7 218.7 0 0 1 3080.50 988.30 L3080.50 1002.60 A204.4 204.4 0 0 0 2887.24 1273.55 Z" fill="#e05660"/><path d="M3080.50 988.30 A218.7 218.7 0 0 1 3292.98 1155.20 L3279.08 1158.59 A204.4 204.4 0 0 0 3080.50 1002.60 Z" fill="#e2ba53"/><path d="M3292.98 1155.20 A218.7 218.7 0 0 1 3287.28 1278.20 L3273.76 1273.55 A204.4 204.4 0 0 0 3279.08 1158.59 Z" fill="#85bd72"/><path d="M2890.26 1272.50 A201.2 201.2 0 1 1 3270.74 1272.50 L3197.37 1247.24 A123.6 123.6 0 1 0 2963.63 1247.24 Z" fill="#85bd72"/></svg></body></html>
